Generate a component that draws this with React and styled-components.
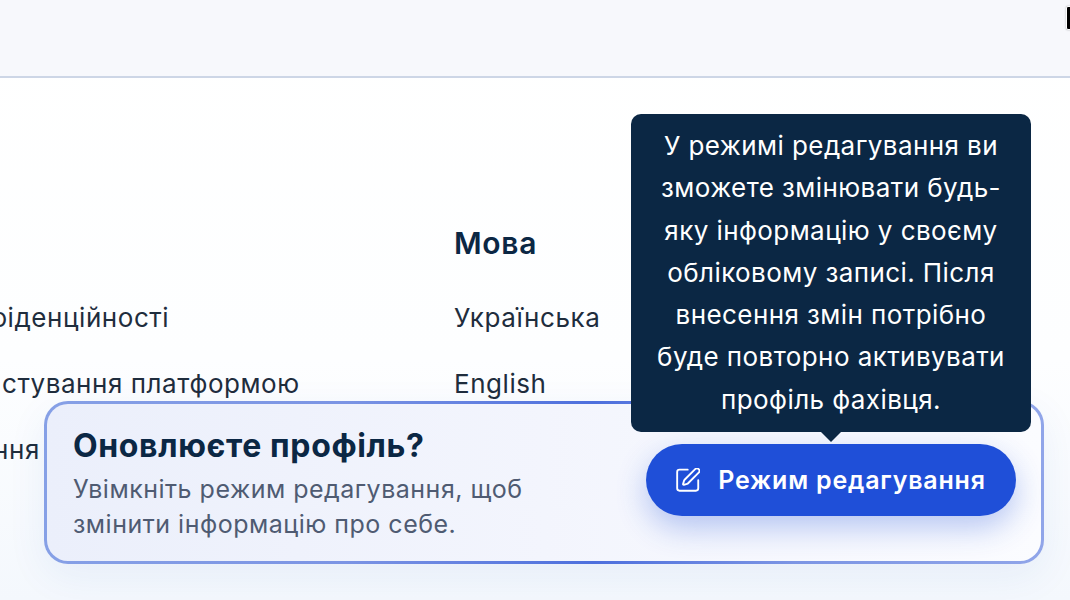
import React from "react";
import styled, { createGlobalStyle } from "styled-components";

const Global = createGlobalStyle`
  html, body { margin: 0; padding: 0; }
  body { width: 1070px; height: 600px; overflow: hidden; font-family: Inter, "Noto Sans", sans-serif; background: #fff; }
`;
const Page = styled.div`
  position: relative;
  width: 1070px;
  height: 600px;
  overflow: hidden;
  background: linear-gradient(180deg, #ffffff 0%, #fdfeff 60%, #f4f8fd 100%);
`;
const Header = styled.header`
  height: 76px;
  background: #f7f8fc;
  border-bottom: 2px solid #cdd6e6;
`;
const Corner = styled.div`
  position: absolute;
  top: 6px;
  right: -4px;
  width: 6px;
  height: 22px;
  background: #000;
  border: 1px solid #fff;
  border-radius: 2px;
  box-shadow: 0 0 2px rgba(0, 0, 0, 0.3);
`;
const Lists = styled.main`
  display: grid;
  grid-template-columns: 636px 1fr;
  margin-left: -182px;
  padding-top: 145px;
`;
const Column = styled.section`
  display: flex;
  flex-direction: column;
`;
const ColumnTitle = styled.h3`
  margin: 0 0 34px;
  height: 40px;
  line-height: 40px;
  font-size: 30px;
  font-weight: 600;
  letter-spacing: 0.7px;
  color: #0b2744;
`;
const Item = styled.div`
  height: 66px;
  line-height: 42px;
  font-size: 26px;
  letter-spacing: 0.55px;
  color: #1f2d3d;
  white-space: nowrap;
`;
const Card = styled.aside`
  position: absolute;
  left: 44px;
  top: 401px;
  box-sizing: border-box;
  width: 1000px;
  height: 163px;
  padding: 0 25px 0 26px;
  display: flex;
  align-items: center;
  justify-content: space-between;
  border: 3px solid transparent;
  border-radius: 24px;
  background:
    linear-gradient(90deg, #ebeffb 0%, #f3f5fd 50%, #fbfcff 100%) padding-box,
    linear-gradient(90deg, #86a0e6 0%, #7b94e4 30%, #4d6fdd 55%, #7c95e4 75%, #90a5e9 100%) border-box;
  box-shadow: 0 12px 40px rgba(30, 90, 180, 0.07);
`;
const Copy = styled.div`
  display: flex;
  flex-direction: column;
  width: 480px;
  padding-top: 2px;
`;
const Title = styled.h2`
  margin: 0 0 6px;
  font-size: 32px;
  line-height: 40px;
  font-weight: 700;
  letter-spacing: 0.64px;
  color: #0b2744;
`;
const Text = styled.p`
  margin: 0;
  font-size: 25px;
  line-height: 35px;
  letter-spacing: 0.5px;
  color: #4f5b72;
`;
const ActionWrap = styled.div`
  position: relative;
  margin-bottom: 5px;
`;
const Button = styled.button`
  display: flex;
  align-items: center;
  justify-content: center;
  gap: 18px;
  width: 370px;
  height: 72px;
  padding: 0;
  border: 0;
  border-radius: 36px;
  background: #1f4fd8;
  color: #fff;
  font-family: inherit;
  font-size: 25px;
  font-weight: 600;
  letter-spacing: 0.8px;
  box-shadow: 0 12px 30px rgba(31, 79, 216, 0.3);
`;
const Tooltip = styled.div`
  position: absolute;
  left: -15px;
  bottom: 84px;
  box-sizing: border-box;
  width: 400px;
  height: 318px;
  padding: 11px 22px;
  border-radius: 10px;
  background: #0b2744;
  color: #fff;
  font-size: 26px;
  letter-spacing: 0.42px;
  line-height: 42.3px;
  text-align: center;
  &::after {
    content: "";
    position: absolute;
    left: 50%;
    bottom: -10px;
    width: 20px;
    height: 10px;
    margin-left: -10px;
    background: #0b2744;
    clip-path: polygon(0 0, 100% 0, 50% 100%);
  }
`;
const EditIcon = () => (
  <svg width="24" height="24" viewBox="2 1.6 20.5 20.5" fill="none" stroke="currentColor" strokeWidth="1.6" strokeLinecap="round" strokeLinejoin="round">
    <path d="M12 3H5a2 2 0 0 0-2 2v14a2 2 0 0 0 2 2h14a2 2 0 0 0 2-2v-7" />
    <path d="M18.375 2.625a1 1 0 0 1 3 3l-9.013 9.014a2 2 0 0 1-.853.505l-2.873.84a.5.5 0 0 1-.62-.62l.84-2.873a2 2 0 0 1 .506-.852z" />
  </svg>
);

export default function App() {
  return (
    <Page>
      <Global />
      <Header />
      <Corner />
      <Lists>
        <Column>
          <ColumnTitle>&nbsp;</ColumnTitle>
          <Item>Політика конфіденційності</Item>
          <Item>Правила користування платформою</Item>
          <Item>Договір надання</Item>
        </Column>
        <Column>
          <ColumnTitle>Мова</ColumnTitle>
          <Item>Українська</Item>
          <Item>English</Item>
        </Column>
      </Lists>
      <Card>
        <Copy>
          <Title>Оновлюєте профіль?</Title>
          <Text>Увімкніть режим редагування, щоб змінити інформацію про себе.</Text>
        </Copy>
        <ActionWrap>
          <Tooltip>У режимі редагування ви зможете змінювати будь-яку інформацію у своєму обліковому записі. Після внесення змін потрібно буде повторно активувати профіль фахівця.</Tooltip>
          <Button><EditIcon />Режим редагування</Button>
        </ActionWrap>
      </Card>
    </Page>
  );
}
